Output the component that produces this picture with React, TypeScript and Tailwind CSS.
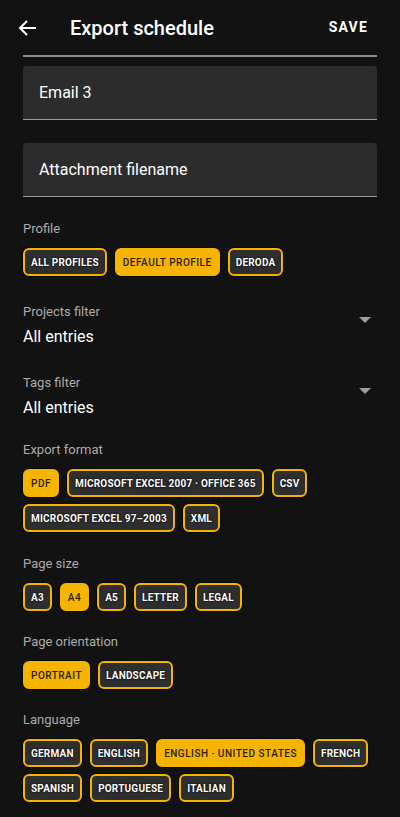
import React from 'react'

type Chip = { label: string; on?: boolean }

const profiles: Chip[] = [{ label: 'All profiles' }, { label: 'Default profile', on: true }, { label: 'Deroda' }]
const formats: Chip[] = [
  { label: 'PDF', on: true },
  { label: 'Microsoft Excel 2007 · Office 365' },
  { label: 'CSV' },
  { label: 'Microsoft Excel 97–2003' },
  { label: 'XML' },
]
const sizes: Chip[] = [{ label: 'A3' }, { label: 'A4', on: true }, { label: 'A5' }, { label: 'Letter' }, { label: 'Legal' }]
const orientations: Chip[] = [{ label: 'Portrait', on: true }, { label: 'Landscape' }]
const languages: Chip[] = [
  { label: 'German' },
  { label: 'English' },
  { label: 'English · United States', on: true },
  { label: 'French' },
  { label: 'Spanish' },
  { label: 'Portuguese' },
  { label: 'Italian' },
]

function ChipRow({ items }: { items: Chip[] }) {
  return (
    <div className="mt-[11px] flex flex-wrap gap-x-[8px] gap-y-[7px]">
      {items.map((c) =>
        c.on ? (
          <span
            key={c.label}
            className="flex h-[28px] items-center whitespace-pre rounded-[6px] border-2 border-[#f4b400] bg-[#f4b400] px-[6px] text-[10px] font-medium uppercase tracking-[0.5px] text-[#2a2200] shadow-[0_0_0_1px_#0a0a0a]"
          >
            {c.label}
          </span>
        ) : (
          <span
            key={c.label}
            className="flex h-[28px] items-center whitespace-pre rounded-[6px] border-2 border-[#f4b400] bg-[#2e2e2e] px-[6px] text-[10px] font-bold uppercase tracking-[0.2px] text-white shadow-[0_0_0_1px_#0a0a0a] [text-shadow:0_0_2px_#000,0_0_1px_#000]"
          >
            {c.label}
          </span>
        ),
      )}
    </div>
  )
}

function Label({ children }: { children: React.ReactNode }) {
  return <p className="h-[16px] text-[13px] leading-[16px] text-[#ababab]">{children}</p>
}

function Dropdown({ label }: { label: string }) {
  return (
    <div className="flex items-center justify-between">
      <div>
        <Label>{label}</Label>
        <p className="mt-[5px] text-[16px] leading-[24px] text-white">All entries</p>
      </div>
      <svg width="12" height="6" viewBox="0 0 12 6" className="mr-[6px] mb-[14px]">
        <path d="M0 0h12L6 6z" fill="#9e9e9e" />
      </svg>
    </div>
  )
}

function Field({ text }: { text: string }) {
  return (
    <div className="flex h-[54px] items-center rounded-t-[4px] border-b border-[#9a9a9a] bg-[#2c2c2c] pl-[16px] text-[16px] text-white">
      {text}
    </div>
  )
}

export default function App() {
  return (
    <div className="min-h-[817px] w-[400px] overflow-hidden bg-[#121212] font-['Roboto',sans-serif]">
      <header className="flex h-[55px] items-center px-[16px]">
        <svg width="24" height="24" viewBox="0 0 24 24" fill="none" stroke="white" strokeWidth="2">
          <path d="M20 12H5M11 5l-7 7 7 7" />
        </svg>
        <h1 className="ml-[30px] text-[20px] font-medium text-white">Export schedule</h1>
        <span className="ml-auto mr-[16px] text-[14px] font-bold tracking-[1.2px] text-white">SAVE</span>
      </header>

      <div className="px-[23px]">
        <div className="h-[2px] bg-[#8a8a8a]" />
        <div className="mt-[9px]">
          <Field text="Email 3" />
        </div>
        <div className="mt-[23px]">
          <Field text="Attachment filename" />
        </div>

        <section className="mt-[24px]">
          <Label>Profile</Label>
          <ChipRow items={profiles} />
        </section>

        <section className="mt-[28px]">
          <Dropdown label="Projects filter" />
        </section>

        <section className="mt-[26px]">
          <Dropdown label="Tags filter" />
        </section>

        <section className="mt-[22px]">
          <Label>Export format</Label>
          <ChipRow items={formats} />
        </section>

        <section className="mt-[24px]">
          <Label>Page size</Label>
          <ChipRow items={sizes} />
        </section>

        <section className="mt-[23px]">
          <Label>Page orientation</Label>
          <ChipRow items={orientations} />
        </section>

        <section className="mt-[23px]">
          <Label>Language</Label>
          <ChipRow items={languages} />
        </section>
      </div>
    </div>
  )
}
